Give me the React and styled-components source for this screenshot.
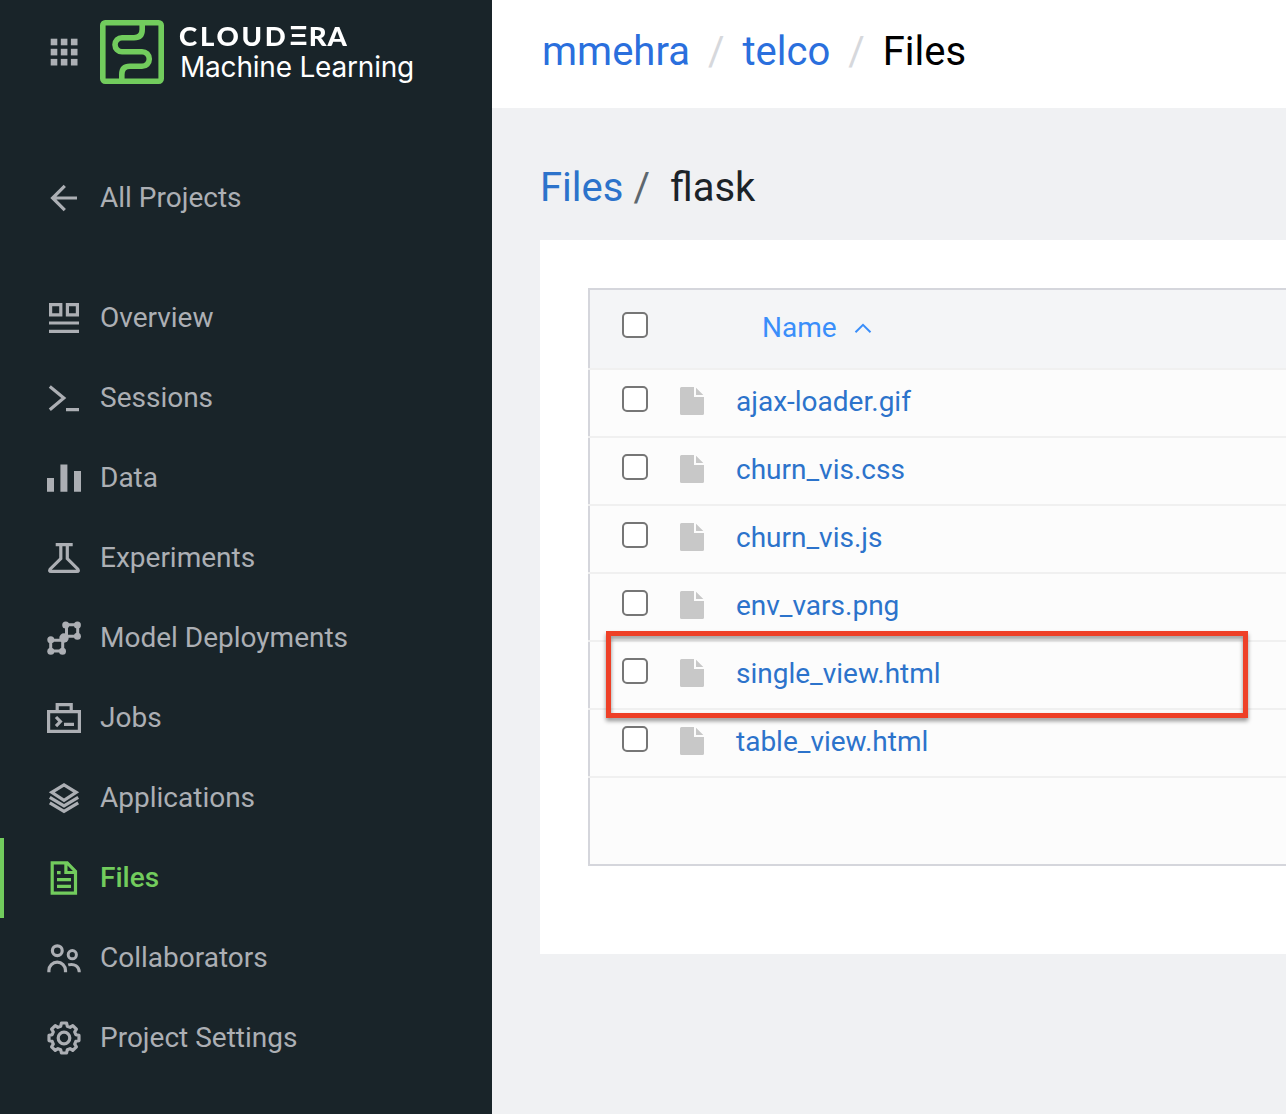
import React from "react";
import styled, { createGlobalStyle } from "styled-components";

const GlobalStyle = createGlobalStyle`
  * { box-sizing: border-box; }
  body {
    margin: 0;
    overflow: hidden;
    font-family: Roboto, "Liberation Sans", sans-serif;
    -webkit-font-smoothing: antialiased;
  }
`;

const Page = styled.div`
  display: flex;
  width: 1286px;
  height: 1114px;
  overflow: hidden;
  background: #f0f1f3;
`;

const Sidebar = styled.aside`
  flex: 0 0 492px;
  background: #192429;
  color: #acafb4;
`;

const Brand = styled.header`
  display: flex;
  align-items: center;
  height: 104px;
  padding-left: 44px;
`;

const BrandMark = styled.svg`
  width: 64px;
  height: 64px;
  margin: 0 16px;
`;

const BrandText = styled.div`
  display: flex;
  flex-direction: column;
  padding-bottom: 1px;
  color: #fff;
  white-space: nowrap;
`;

const Company = styled.div`
  display: flex;
  align-self: flex-start;
  margin-left: -1px;
  font: 900 26px/32px Lato, sans-serif;
  transform: scaleX(1.06);
  transform-origin: 0 50%;
`;

const Tracked = styled.span`
  letter-spacing: ${(p) => p.$tracking}px;
`;

const BarredE = styled.span`
  width: 19px;
  font-family: Inter, sans-serif;
  font-weight: 700;
  font-size: 25.5px;
  text-align: center;
`;

const Product = styled.div`
  font: 400 28px/31px Inter, sans-serif;
  letter-spacing: -0.2px;
`;

const Nav = styled.nav`
  display: flex;
  flex-direction: column;
  padding-top: 54px;
`;

const NavItem = styled.a`
  display: flex;
  align-items: center;
  gap: 16px;
  height: 80px;
  padding-left: 40px;
  margin-bottom: ${(p) => (p.$spaced ? 40 : 0)}px;
  border-left: 4px solid ${(p) => (p.$active ? "#72cc5d" : "transparent")};
  color: ${(p) => (p.$active ? "#72cc5d" : "inherit")};
  font-size: 28px;
  font-weight: ${(p) => (p.$active ? 500 : 400)};
  white-space: nowrap;
`;

const NavLabel = styled.span`
  padding-bottom: 2px;
`;

const Icon = styled.svg`
  flex: none;
  width: 40px;
  height: 40px;
  overflow: visible;
  fill: none;
  stroke: currentColor;
  stroke-width: 3.2;
  .solid {
    fill: currentColor;
    stroke: none;
  }
`;

const Main = styled.main`
  flex: 1;
  min-width: 0;
`;

const TopBar = styled.div`
  display: flex;
  align-items: center;
  height: 108px;
  padding: 0 0 5px 50px;
  background: #fff;
  font-size: 40px;
`;

const Crumb = styled.span`
  color: ${(p) => p.$color};
`;

const TopSlash = styled.span`
  width: 52.5px;
  color: #d6d8dc;
  text-align: center;
`;

const PathRow = styled.div`
  display: flex;
  align-items: center;
  height: 132px;
  padding: 27px 0 0 48px;
  font-size: 40px;
`;

const PathSlash = styled.span`
  margin: 0 20px 0 10px;
  color: #5d676e;
`;

const Panel = styled.section`
  height: 714px;
  margin-left: 48px;
  padding: 48px 0 0 48px;
  background: #fff;
`;

const Table = styled.div`
  display: flex;
  flex-direction: column;
  height: 578px;
  border: solid #d5d6dc;
  border-width: 2px 0;
  background: #fcfcfc;
`;

const Row = styled.div`
  position: relative;
  display: flex;
  align-items: flex-start;
  height: ${(p) => (p.$head ? 80 : 68)}px;
  padding: ${(p) => (p.$head ? 22 : 16)}px 0 0 34px;
  border-bottom: 2px solid #f0f0f0;
  box-shadow: inset 2px 0 #d5d6dc;
  background: ${(p) => (p.$head ? "#f4f5f7" : "transparent")};
  font-size: 28px;
  line-height: 32px;
`;

const TableRest = styled.div`
  flex: 1;
  box-shadow: inset 2px 0 #d5d6dc;
`;

const Checkbox = styled.span`
  flex: none;
  width: 26px;
  height: 26px;
  border: 2px solid #767676;
  border-radius: 5px;
  background: #fff;
`;

const FileGlyph = styled.svg`
  flex: none;
  width: 24px;
  height: 28px;
  margin: 1px 32px 0;
  fill: #c8c8c8;
`;

const FileName = styled.a`
  color: #2c73cb;
`;

const SortLabel = styled.span`
  margin-left: 114px;
  color: #3a8efa;
`;

const Caret = styled.svg`
  width: 18px;
  height: 12px;
  margin: 10px 0 0 17px;
  fill: none;
  stroke: #3a8efa;
  stroke-width: 2;
`;

const Highlight = styled.div`
  position: absolute;
  z-index: 1;
  left: 18px;
  top: -11px;
  width: 642px;
  height: 87px;
  border: 5px solid #ee4027;
  filter: drop-shadow(0 3px 2px rgba(0, 0, 0, 0.42));
`;

const gearPath = (() => {
  const pts = [];
  for (let i = 0; i < 8; i++) {
    const base = (i * Math.PI) / 4;
    [[12.3, -0.27], [15.2, -0.17], [15.2, 0.17], [12.3, 0.27]].forEach(([r, a]) => {
      pts.push(`${(20 + r * Math.sin(base + a)).toFixed(2)} ${(20 - r * Math.cos(base + a)).toFixed(2)}`);
    });
  }
  return `M${pts.join("L")}Z`;
})();

const icons = {
  back: <path d="M33 20H9M20.8 7.8L8.6 20l12.2 12.2" strokeWidth="3.2" />,
  overview: (
    <path d="M6.6 6.6h10.2v10.2H6.6zM23.4 6.6h10v10.2h-10zM5 25h30M5 33.4h30" />
  ),
  sessions: <path d="M5.8 8.6L19.8 20 5.8 31.8M22 31.7h13" />,
  data: <path className="solid" d="M3 20h7v13.7H3zM16.4 6.4h7v27.3h-7zM30 13h7v20.7h-7z" />,
  experiments: (
    <path d="M11.7 6.6h17M16.8 7v13.6L6.1 31.2q-1.3 2.2.9 2.2h26q2.2 0 .9-2.2L23.3 20.6V7" />
  ),
  models: (
    <>
      <path d="M22.5 17.5V6.7h11.2v11.6H22M18 22.2H6.7V33h12V22" strokeWidth="3" />
      <g className="solid">
        <circle cx="21.7" cy="6.9" r="3.5" />
        <circle cx="33.4" cy="6.9" r="3.5" />
        <circle cx="33.4" cy="18.2" r="3.5" />
        <circle cx="20" cy="20" r="4.7" />
        <circle cx="6.8" cy="21.8" r="3.5" />
        <circle cx="6.8" cy="33.2" r="3.5" />
        <circle cx="18.5" cy="33.2" r="3.5" />
      </g>
    </>
  ),
  jobs: (
    <path d="M4.6 13.6h30.8v19.8H4.6zM13.2 13V6.6h14V13M12 19l4.4 4.6L12 28.2M20 26.4h10" />
  ),
  applications: (
    <path d="M20 6.9l12.2 7.5L20 22.3 7.8 14.4zM5.8 19.3L20 27.9l14.2-8.6M5.8 24.8L20 33.4l14.2-8.6" strokeWidth="3.2" />
  ),
  files: (
    <path d="M8.2 4.9h15l8.3 8.6v21.6H8.2zM21.9 5v9.5h9.5M13 14.7h3.6M13 21.7h14M13 28.4h14" />
  ),
  collaborators: (
    <>
      <circle cx="13.3" cy="12.7" r="4.9" />
      <circle cx="28.3" cy="16.7" r="4.1" strokeWidth="3" />
      <path d="M4.9 34.3v-1.8a8.3 8.3 0 0 1 16.6 0v1.8" />
      <path d="M24.2 26.9c6.2-1.8 11.1 1.6 11.1 7.4" strokeWidth="3" />
    </>
  ),
  settings: (
    <>
      <path d={gearPath} strokeWidth="3.2" strokeLinejoin="round" />
      <circle cx="20" cy="20" r="5.8" strokeWidth="3.2" />
    </>
  ),
};

const navItems = [
  { icon: "back", label: "All Projects", spaced: true },
  { icon: "overview", label: "Overview" },
  { icon: "sessions", label: "Sessions" },
  { icon: "data", label: "Data" },
  { icon: "experiments", label: "Experiments" },
  { icon: "models", label: "Model Deployments" },
  { icon: "jobs", label: "Jobs" },
  { icon: "applications", label: "Applications" },
  { icon: "files", label: "Files", active: true },
  { icon: "collaborators", label: "Collaborators" },
  { icon: "settings", label: "Project Settings" },
];

const files = [
  { name: "ajax-loader.gif" },
  { name: "churn_vis.css" },
  { name: "churn_vis.js" },
  { name: "env_vars.png" },
  { name: "single_view.html", highlighted: true },
  { name: "table_view.html" },
];

const gridCells = [0, 1, 2].flatMap((r) => [0, 1, 2].map((c) => [c, r]));

export default function App() {
  return (
    <Page>
      <GlobalStyle />
      <Sidebar>
        <Brand>
          <Icon viewBox="0 0 40 40">
            {gridCells.map(([c, r]) => (
              <rect key={`${c}${r}`} className="solid" x={6.7 + c * 10.1} y={6.7 + r * 10.1} width="6.6" height="6.6" />
            ))}
          </Icon>
          <BrandMark viewBox="0 0 64 64" fill="none" stroke="#72cc5d" strokeWidth="5.6">
            <rect x="2.8" y="2.8" width="58.4" height="58.4" rx="2.4" />
            <path d="M42.2 4v5.5q0 8.2-8.2 8.2H22a7 7 0 0 0 0 14h20a7.3 7.3 0 0 1 0 14.6H30q-8.2 0-8.2 8.2V60" />
          </BrandMark>
          <BrandText>
            <Company>
              <Tracked $tracking={2.6}>CLOUD</Tracked>
              <BarredE>Ξ</BarredE>
              <Tracked $tracking={0.8}>RA</Tracked>
            </Company>
            <Product>Machine Learning</Product>
          </BrandText>
        </Brand>
        <Nav>
          {navItems.map((item) => (
            <NavItem key={item.label} $active={item.active} $spaced={item.spaced}>
              <Icon viewBox="0 0 40 40">{icons[item.icon]}</Icon>
              <NavLabel>{item.label}</NavLabel>
            </NavItem>
          ))}
        </Nav>
      </Sidebar>
      <Main>
        <TopBar>
          <Crumb $color="#2a6fdd">mmehra</Crumb>
          <TopSlash>/</TopSlash>
          <Crumb $color="#2a6fdd">telco</Crumb>
          <TopSlash>/</TopSlash>
          <Crumb $color="#000">Files</Crumb>
        </TopBar>
        <PathRow>
          <Crumb $color="#2c73cb">Files</Crumb>
          <PathSlash>/</PathSlash>
          <Crumb $color="#1b2328">flask</Crumb>
        </PathRow>
        <Panel>
          <Table>
            <Row $head>
              <Checkbox />
              <SortLabel>Name</SortLabel>
              <Caret viewBox="0 0 18 12">
                <path d="M1.5 10.2L9 2.8l7.5 7.4" />
              </Caret>
            </Row>
            {files.map((file) => (
              <Row key={file.name}>
                <Checkbox />
                <FileGlyph viewBox="0 0 24 28">
                  <path d="M1.5 0H14v10h10v16.500q0 1.500-1.500 1.500h-21Q0 28 0 26.500v-25Q0 0 1.500 0zM16 .8L23.300 8H16z" />
                </FileGlyph>
                <FileName>{file.name}</FileName>
                {file.highlighted && <Highlight />}
              </Row>
            ))}
            <TableRest />
          </Table>
        </Panel>
      </Main>
    </Page>
  );
}
